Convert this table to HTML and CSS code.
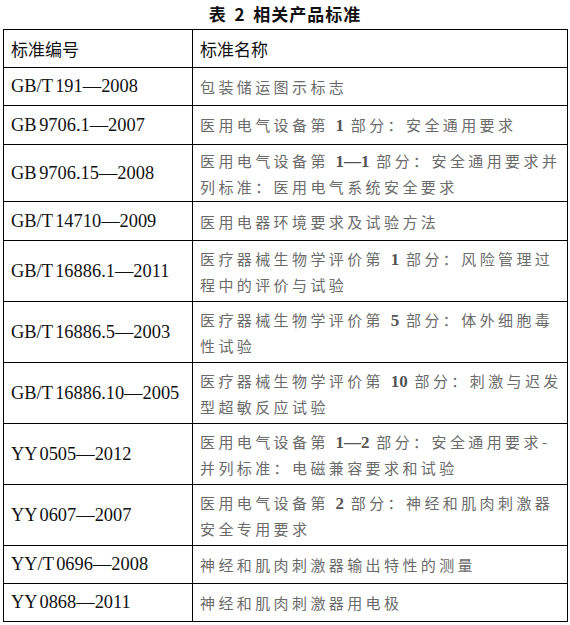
FILE: index.html
```html
<!DOCTYPE html>
<html lang="zh-CN">
<head>
<meta charset="utf-8">
<title>表 2 相关产品标准</title>
<link rel="stylesheet" href="styles.css">
</head>
<body>
<div class="page">
  <h1 class="caption">表 2 相关产品标准</h1>
  <table class="std-table">
    <colgroup>
      <col class="col-code">
      <col class="col-name">
    </colgroup>
    <thead>
      <tr class="row-1">
        <th>标准编号</th>
        <th>标准名称</th>
      </tr>
    </thead>
    <tbody>
      <tr class="row-1">
        <td class="code">GB/T 191—2008</td>
        <td class="name">包装储运图示标志</td>
      </tr>
      <tr class="row-1b">
        <td class="code">GB 9706.1—2007</td>
        <td class="name">医用电气设备第 <span class="num">1</span> 部分：安全通用要求</td>
      </tr>
      <tr class="row-2a">
        <td class="code">GB 9706.15—2008</td>
        <td class="name">医用电气设备第 <span class="num">1—1</span> 部分：安全通用要求并<br>列标准：医用电气系统安全要求</td>
      </tr>
      <tr class="row-1b">
        <td class="code">GB/T 14710—2009</td>
        <td class="name">医用电器环境要求及试验方法</td>
      </tr>
      <tr class="row-2">
        <td class="code">GB/T 16886.1—2011</td>
        <td class="name">医疗器械生物学评价第 <span class="num">1</span> 部分：风险管理过<br>程中的评价与试验</td>
      </tr>
      <tr class="row-2">
        <td class="code">GB/T 16886.5—2003</td>
        <td class="name">医疗器械生物学评价第 <span class="num">5</span> 部分：体外细胞毒<br>性试验</td>
      </tr>
      <tr class="row-2">
        <td class="code">GB/T 16886.10—2005</td>
        <td class="name">医疗器械生物学评价第 <span class="num">10</span> 部分：刺激与迟发<br>型超敏反应试验</td>
      </tr>
      <tr class="row-2">
        <td class="code">YY 0505—2012</td>
        <td class="name">医用电气设备第 <span class="num">1—2</span> 部分：安全通用要求-<br>并列标准：电磁兼容要求和试验</td>
      </tr>
      <tr class="row-2">
        <td class="code">YY 0607—2007</td>
        <td class="name">医用电气设备第 <span class="num">2</span> 部分：神经和肌肉刺激器<br>安全专用要求</td>
      </tr>
      <tr class="row-1">
        <td class="code">YY/T 0696—2008</td>
        <td class="name">神经和肌肉刺激器输出特性的测量</td>
      </tr>
      <tr class="row-1">
        <td class="code">YY 0868—2011</td>
        <td class="name">神经和肌肉刺激器用电极</td>
      </tr>
    </tbody>
  </table>
</div>
</body>
</html>
```

FILE: styles.css
```css
html, body {
  margin: 0;
  padding: 0;
  background: #ffffff;
}

.page {
  width: 570px;
  padding: 0 0 0 3px;
  box-sizing: border-box;
}

.caption {
  margin: 0;
  height: 29px;
  line-height: 28px;
  text-align: center;
  font-family: "Noto Sans CJK SC", sans-serif;
  font-size: 17px;
  font-weight: bold;
  letter-spacing: 1px;
  word-spacing: 3px;
  color: #111;
  padding-right: 3px;
}

.std-table {
  border-collapse: collapse;
  width: 565px;
  table-layout: fixed;
}

.col-code {
  width: 189px;
}

.std-table th,
.std-table td {
  border: 1px solid #000;
  padding: 0 0 0 7px;
  vertical-align: middle;
  text-align: left;
}

.std-table th {
  font-family: "Noto Sans CJK SC", sans-serif;
  font-weight: normal;
  font-size: 17px;
  color: #111;
}

.row-1 { height: 38px; }
.row-1b { height: 39px; }
.row-2a { height: 57px; }
.row-2 { height: 61px; }

.code {
  font-family: "Liberation Serif", "Times New Roman", serif;
  font-size: 18.4px;
  color: #111;
  word-spacing: -2px;
  white-space: nowrap;
}

.name {
  font-family: "Noto Sans CJK SC", sans-serif;
  font-size: 15px;
  line-height: 25px;
  letter-spacing: 3.4px;
  color: #6b6b6b;
  white-space: nowrap;
}

.num {
  font-family: "Liberation Serif", "Times New Roman", serif;
  font-size: 17px;
  font-weight: bold;
  color: #555;
  letter-spacing: 0;
}
```
